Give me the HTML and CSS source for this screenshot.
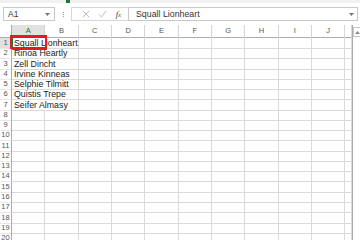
FILE: index.html
```html
<!DOCTYPE html>
<html lang="en">
<head>
  <meta charset="UTF-8">
  <title>Book1 - Excel</title>
  <link rel="stylesheet" href="styles.css">
</head>
<body>
  <div class="topstrip"><div class="topstrip-tab"></div></div>

  <div class="formula-bar">
    <div class="namebox">
      <span>A1</span>
      <svg class="drop" width="5" height="3" viewBox="0 0 5 3"><path d="M0 0h5L2.5 3z" fill="#777"/></svg>
    </div>
    <div class="grip"><i></i><i></i><i></i></div>
    <div class="fx-buttons">
      <svg width="8" height="8" viewBox="0 0 8 8"><path d="M1 1l6 6M7 1L1 7" stroke="#bdbdbd" stroke-width="1"/></svg>
      <svg width="9" height="8" viewBox="0 0 9 8"><path d="M1 4.5l2.5 2.5L8 1" stroke="#bdbdbd" stroke-width="1" fill="none"/></svg>
      <span class="fx">f<small>x</small></span>
    </div>
    <div class="formula-input">
      <span>Squall Lionheart</span>
      <svg class="drop" width="5" height="3" viewBox="0 0 5 3"><path d="M0 0h5L2.5 3z" fill="#777"/></svg>
    </div>
  </div>

  <div class="workspace">
    <div class="sheet">
      <div class="row head-row">
        <div class="corner"></div>
        <div class="col-head active">A</div>
        <div class="col-head">B</div>
        <div class="col-head">C</div>
        <div class="col-head">D</div>
        <div class="col-head">E</div>
        <div class="col-head">F</div>
        <div class="col-head">G</div>
        <div class="col-head">H</div>
        <div class="col-head">I</div>
        <div class="col-head">J</div>
        <div class="col-head"></div>
      </div>

      <div class="row">
        <div class="row-head active">1</div>
        <div class="cell wide selected">Squall Lionheart
          <div class="highlight"></div>
        </div>
        <div class="cell"></div><div class="cell"></div><div class="cell"></div><div class="cell"></div><div class="cell"></div><div class="cell"></div><div class="cell"></div><div class="cell"></div><div class="cell"></div>
      </div>
      <div class="row">
        <div class="row-head">2</div>
        <div class="cell wide">Rinoa Heartly</div>
        <div class="cell"></div><div class="cell"></div><div class="cell"></div><div class="cell"></div><div class="cell"></div><div class="cell"></div><div class="cell"></div><div class="cell"></div><div class="cell"></div>
      </div>
      <div class="row">
        <div class="row-head">3</div>
        <div class="cell wide">Zell Dincht</div>
        <div class="cell"></div><div class="cell"></div><div class="cell"></div><div class="cell"></div><div class="cell"></div><div class="cell"></div><div class="cell"></div><div class="cell"></div><div class="cell"></div>
      </div>
      <div class="row">
        <div class="row-head">4</div>
        <div class="cell wide">Irvine Kinneas</div>
        <div class="cell"></div><div class="cell"></div><div class="cell"></div><div class="cell"></div><div class="cell"></div><div class="cell"></div><div class="cell"></div><div class="cell"></div><div class="cell"></div>
      </div>
      <div class="row">
        <div class="row-head">5</div>
        <div class="cell wide">Selphie Tilmitt</div>
        <div class="cell"></div><div class="cell"></div><div class="cell"></div><div class="cell"></div><div class="cell"></div><div class="cell"></div><div class="cell"></div><div class="cell"></div><div class="cell"></div>
      </div>
      <div class="row">
        <div class="row-head">6</div>
        <div class="cell wide">Quistis Trepe</div>
        <div class="cell"></div><div class="cell"></div><div class="cell"></div><div class="cell"></div><div class="cell"></div><div class="cell"></div><div class="cell"></div><div class="cell"></div><div class="cell"></div>
      </div>
      <div class="row">
        <div class="row-head">7</div>
        <div class="cell wide">Seifer Almasy</div>
        <div class="cell"></div><div class="cell"></div><div class="cell"></div><div class="cell"></div><div class="cell"></div><div class="cell"></div><div class="cell"></div><div class="cell"></div><div class="cell"></div>
      </div>
      <div class="row"><div class="row-head">8</div><div class="cell"></div><div class="cell"></div><div class="cell"></div><div class="cell"></div><div class="cell"></div><div class="cell"></div><div class="cell"></div><div class="cell"></div><div class="cell"></div><div class="cell"></div><div class="cell"></div></div>
      <div class="row"><div class="row-head">9</div><div class="cell"></div><div class="cell"></div><div class="cell"></div><div class="cell"></div><div class="cell"></div><div class="cell"></div><div class="cell"></div><div class="cell"></div><div class="cell"></div><div class="cell"></div><div class="cell"></div></div>
      <div class="row"><div class="row-head">10</div><div class="cell"></div><div class="cell"></div><div class="cell"></div><div class="cell"></div><div class="cell"></div><div class="cell"></div><div class="cell"></div><div class="cell"></div><div class="cell"></div><div class="cell"></div><div class="cell"></div></div>
      <div class="row"><div class="row-head">11</div><div class="cell"></div><div class="cell"></div><div class="cell"></div><div class="cell"></div><div class="cell"></div><div class="cell"></div><div class="cell"></div><div class="cell"></div><div class="cell"></div><div class="cell"></div><div class="cell"></div></div>
      <div class="row"><div class="row-head">12</div><div class="cell"></div><div class="cell"></div><div class="cell"></div><div class="cell"></div><div class="cell"></div><div class="cell"></div><div class="cell"></div><div class="cell"></div><div class="cell"></div><div class="cell"></div><div class="cell"></div></div>
      <div class="row"><div class="row-head">13</div><div class="cell"></div><div class="cell"></div><div class="cell"></div><div class="cell"></div><div class="cell"></div><div class="cell"></div><div class="cell"></div><div class="cell"></div><div class="cell"></div><div class="cell"></div><div class="cell"></div></div>
      <div class="row"><div class="row-head">14</div><div class="cell"></div><div class="cell"></div><div class="cell"></div><div class="cell"></div><div class="cell"></div><div class="cell"></div><div class="cell"></div><div class="cell"></div><div class="cell"></div><div class="cell"></div><div class="cell"></div></div>
      <div class="row"><div class="row-head">15</div><div class="cell"></div><div class="cell"></div><div class="cell"></div><div class="cell"></div><div class="cell"></div><div class="cell"></div><div class="cell"></div><div class="cell"></div><div class="cell"></div><div class="cell"></div><div class="cell"></div></div>
      <div class="row"><div class="row-head">16</div><div class="cell"></div><div class="cell"></div><div class="cell"></div><div class="cell"></div><div class="cell"></div><div class="cell"></div><div class="cell"></div><div class="cell"></div><div class="cell"></div><div class="cell"></div><div class="cell"></div></div>
      <div class="row"><div class="row-head">17</div><div class="cell"></div><div class="cell"></div><div class="cell"></div><div class="cell"></div><div class="cell"></div><div class="cell"></div><div class="cell"></div><div class="cell"></div><div class="cell"></div><div class="cell"></div><div class="cell"></div></div>
      <div class="row"><div class="row-head">18</div><div class="cell"></div><div class="cell"></div><div class="cell"></div><div class="cell"></div><div class="cell"></div><div class="cell"></div><div class="cell"></div><div class="cell"></div><div class="cell"></div><div class="cell"></div><div class="cell"></div></div>
      <div class="row"><div class="row-head">19</div><div class="cell"></div><div class="cell"></div><div class="cell"></div><div class="cell"></div><div class="cell"></div><div class="cell"></div><div class="cell"></div><div class="cell"></div><div class="cell"></div><div class="cell"></div><div class="cell"></div></div>
      <div class="row"><div class="row-head">20</div><div class="cell"></div><div class="cell"></div><div class="cell"></div><div class="cell"></div><div class="cell"></div><div class="cell"></div><div class="cell"></div><div class="cell"></div><div class="cell"></div><div class="cell"></div><div class="cell"></div></div>
    </div>

    <div class="vscroll">
      <div class="vscroll-up">
        <svg width="5" height="3" viewBox="0 0 5 3"><path d="M0 3h5L2.5 0z" fill="#888"/></svg>
      </div>
      <div class="vscroll-track"></div>
    </div>
  </div>
</body>
</html>
```

FILE: styles.css
```css
* { margin: 0; padding: 0; box-sizing: border-box; }

html,
body { width: 100%; height: 100%; overflow: hidden; }

body {
  background: #fff;
  font-family: "Liberation Sans", sans-serif;
  color: #222;
}

.topstrip {
  height: 3px;
  background: #f1f1f1;
  display: flex;
  justify-content: flex-start;
}
.topstrip-tab {
  width: 4px;
  margin-left: 66px;
  background: #217346;
}

/* formula bar */
.formula-bar {
  height: 20px;
  display: flex;
  align-items: center;
  padding: 2px 2px 0 3px;
}
.namebox {
  width: 52px;
  height: 14px;
  border: 1px solid #c8c8c8;
  display: flex;
  align-items: center;
  justify-content: space-between;
  padding: 0 4px 0 4px;
  font-size: 8.5px;
  color: #333;
}
.grip {
  width: 16px;
  display: flex;
  flex-direction: column;
  align-items: center;
  gap: 1px;
}
.grip i {
  width: 1px;
  height: 1px;
  background: #9a9a9a;
}
.fx-buttons {
  width: 57px;
  height: 14px;
  border: 1px solid #d6d6d6;
  border-right: 0;
  display: flex;
  align-items: center;
  justify-content: space-around;
  padding: 0 3px 0 6px;
}
.fx {
  font-family: "Liberation Serif", serif;
  font-style: italic;
  font-size: 9px;
  color: #444;
  line-height: 1;
}
.fx small { font-size: 6px; }
.formula-input {
  flex: 1;
  height: 14px;
  border: 1px solid #c8c8c8;
  display: flex;
  align-items: center;
  justify-content: space-between;
  padding: 0 3px 0 7px;
  font-size: 8.8px;
  color: #333;
}

/* sheet */
.workspace {
  margin-top: 2px;
  display: flex;
}
.sheet {
  width: 352px;
}
.row {
  display: grid;
  grid-template-columns: 12px repeat(10, 33.33px) 6.7px;
  height: 10.28px;
}
.head-row {
  height: 13px;
  border-bottom: 1px solid #ababab;
}
.corner {
  border-right: 1px solid #ababab;
}
.col-head {
  font-size: 7.5px;
  color: #555;
  text-align: center;
  line-height: 12px;
  border-right: 1px solid #d4d4d4;
}
.col-head.active {
  background: #e1e1e1;
  color: #217346;
  border-bottom: 1px solid #217346;
}
.row-head {
  font-size: 7.5px;
  color: #555;
  text-align: center;
  line-height: 10px;
  border-right: 1px solid #ababab;
  border-bottom: 1px solid #e8e8e8;
}
.row-head.active {
  background: #e1e1e1;
  color: #217346;
  border-right-color: #217346;
}
.cell {
  border-right: 1px solid #dadada;
  border-bottom: 1px solid #dadada;
  font-size: 8.8px;
  line-height: 10px;
  padding-left: 2px;
  white-space: nowrap;
  position: relative;
}
.cell.wide { grid-column: span 2; }
.cell.selected::before {
  content: "";
  position: absolute;
  left: 0;
  top: -1px;
  width: 33px;
  height: 11px;
  border: 1px solid #217346;
}
.highlight {
  position: absolute;
  left: -2px;
  top: -3px;
  width: 37px;
  height: 14px;
  border: 2px solid #e31b23;
}

.vscroll {
  width: 8px;
  border-left: 1px solid #ababab;
  display: flex;
  flex-direction: column;
}
.vscroll-up {
  height: 10px;
  margin-top: 2px;
  border: 1px solid #c8c8c8;
  border-right: 0;
  display: flex;
  align-items: center;
  justify-content: center;
}
.vscroll-track {
  flex: 1;
  background: #fff;
}
```
